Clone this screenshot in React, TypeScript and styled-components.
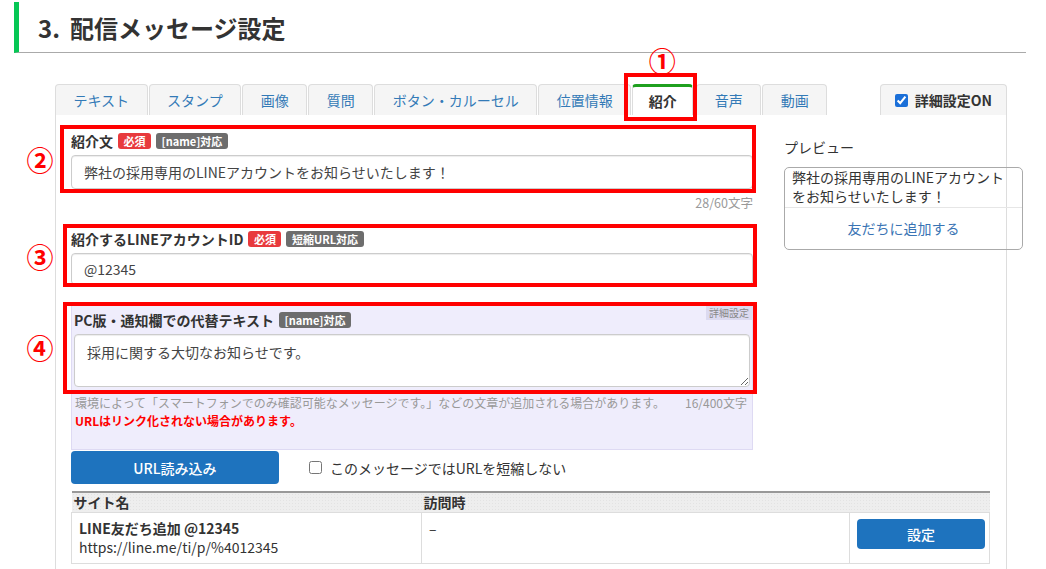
import React from 'react';
import styled, { createGlobalStyle, css } from 'styled-components';

const GlobalStyle = createGlobalStyle`
  * {
    box-sizing: border-box;
  }

  body {
    margin: 0;
    background: #fff;
    color: #333;
    font-family: "Noto Sans CJK JP", "Noto Sans", sans-serif;
  }
`;

const Page = styled.div`
  height: 569px;
  overflow: hidden;
  padding: 2px 20px 0 14px;
  width: 1046px;
`;

const SectionHeader = styled.h2`
  align-items: center;
  border-bottom: 1px solid #aaa;
  border-left: 5px solid #06c755;
  color: #333;
  display: flex;
  font-size: 24px;
  font-weight: bold;
  height: 51px;
  margin: 0;
  padding-left: 19px;
`;

const SectionNumber = styled.span`
  margin-right: 10px;
`;

const Editor = styled.div`
  margin: 31px 0 0 41px;
  width: 952px;
`;

const TabRow = styled.div`
  align-items: flex-end;
  display: flex;
  height: 31px;
  justify-content: space-between;
`;

const Tabs = styled.div`
  display: flex;
  gap: 1px;
`;

const Tab = styled.div<{ $active?: boolean }>`
  align-items: center;
  background: #f5f5f5;
  border: 1px solid #ddd;
  border-bottom: none;
  border-radius: 4px 4px 0 0;
  color: #337ab7;
  display: flex;
  font-size: 14px;
  height: 31px;
  padding: 0 17.5px;
  position: relative;
  white-space: nowrap;

  ${(p) => p.$active && css`
    background: #fff;
    border-top: 3px solid #1fa01f;
    color: #333;
    font-weight: bold;
    margin-right: 2px;
    padding: 0 15.5px;
  `}
`;

const DetailToggle = styled.label`
  align-items: center;
  background: #f5f5f5;
  border: 1px solid #ddd;
  border-bottom: none;
  border-radius: 4px 4px 0 0;
  color: #333;
  display: flex;
  font-size: 14px;
  font-weight: bold;
  gap: 7px;
  height: 31px;
  padding: 0 14px;
`;

const Check = styled.input`
  accent-color: #1a6fd8;
  height: 13px;
  margin: 0;
  width: 13px;
`;

const Panel = styled.div`
  border-left: 1px solid #ddd;
  border-right: 1px solid #ddd;
  display: flex;
  gap: 31px;
  min-height: 460px;
  padding: 16px 0 0 15px;
`;

const MainColumn = styled.div`
  flex-shrink: 0;
  width: 682px;
`;

const PreviewColumn = styled.div`
  flex-shrink: 0;
  width: 239px;
`;

const Annotated = styled.div`
  position: relative;
`;

const Frame = styled.span<{ $t: number; $r: number; $b: number; $l: number }>`
  border: 4px solid #f00;
  bottom: ${(p) => p.$b}px;
  left: ${(p) => p.$l}px;
  pointer-events: none;
  position: absolute;
  right: ${(p) => p.$r}px;
  top: ${(p) => p.$t}px;
  z-index: 5;
`;

const Marker = styled.span<{ $x: number; $y: number }>`
  color: #f00;
  font-family: "Noto Sans CJK JP", sans-serif;
  font-size: 27px;
  font-weight: bold;
  left: ${(p) => p.$x}px;
  line-height: 1;
  position: absolute;
  top: ${(p) => p.$y}px;
  transform: translate(-50%, -50%);
  z-index: 5;
`;

const FieldLabel = styled.div`
  align-items: center;
  color: #333;
  display: flex;
  font-size: 14px;
  font-weight: bold;
  gap: 5px;
  height: 20px;
  white-space: nowrap;
`;

const Badge = styled.span<{ $tone: 'red' | 'gray' }>`
  background: ${(p) => (p.$tone === 'red' ? '#e83a3d' : '#6d6d6d')};
  border-radius: 3px;
  color: #fff;
  display: inline-block;
  font-size: 11px;
  font-weight: bold;
  height: 16px;
  line-height: 16px;
  padding: 0 5.5px;
`;

const TextInput = styled.input<{ $height: number }>`
  border: 1px solid #ccc;
  border-radius: 4px;
  box-shadow: inset 0 1px 1px rgba(0, 0, 0, .075);
  color: #444;
  display: block;
  font-family: inherit;
  font-size: 14px;
  height: ${(p) => p.$height}px;
  margin-top: 4px;
  padding: 0 12px;
  width: 100%;
`;

const Counter = styled.div`
  color: #999;
  font-size: 12.5px;
  line-height: 16px;
  margin: 6px 0 18px;
  text-align: right;
`;

const AltTextBox = styled.div`
  background: #efedfc;
  border: 1px solid #dedaf3;
  margin-top: 17px;
  padding: 7px 2px 20px;
  position: relative;
`;

const DetailTag = styled.span`
  background: #dcdaf0;
  color: #888;
  font-size: 10px;
  line-height: 15px;
  padding: 0 3px;
  position: absolute;
  right: 0;
  top: 2px;
`;

const TextArea = styled.textarea`
  border: 1px solid #ccc;
  border-radius: 4px;
  box-shadow: inset 0 1px 1px rgba(0, 0, 0, .075);
  color: #444;
  display: block;
  font-family: inherit;
  font-size: 14px;
  height: 53px;
  line-height: 20px;
  margin-top: 4px;
  padding: 7px 12px;
  resize: vertical;
  width: 100%;
`;

const HelpRow = styled.div`
  color: #999;
  display: flex;
  font-size: 12px;
  justify-content: space-between;
  line-height: 16px;
  margin: 8px 3px 0 1px;
`;

const Warning = styled.div`
  color: #f00;
  font-size: 12px;
  font-weight: bold;
  line-height: 16px;
  margin: 2px 0 0 1px;
`;

const ActionRow = styled.div`
  align-items: center;
  display: flex;
  margin-top: 1px;
`;

const PrimaryButton = styled.button<{ $width: number; $height: number }>`
  background: #1e73be;
  border: none;
  border-radius: 4px;
  color: #fff;
  font-family: inherit;
  font-size: 14px;
  font-weight: 500;
  height: ${(p) => p.$height}px;
  padding: 0;
  width: ${(p) => p.$width}px;
`;

const ShortenOption = styled.label`
  align-items: center;
  color: #333;
  display: flex;
  font-size: 14px;
  gap: 8px;
  margin-left: 30px;
`;

const LinkTable = styled.table`
  border-collapse: collapse;
  border-top: 2px solid #999;
  margin-top: 7px;
  table-layout: fixed;
  width: 918px;
`;

const HeadCell = styled.th<{ $width: number }>`
  background-color: #eee;
  background-image: radial-gradient(#e3e3e3 0.6px, transparent 0.8px);
  background-size: 3px 3px;
  border-bottom: 1px solid #ddd;
  color: #333;
  font-size: 14px;
  font-weight: bold;
  height: 20px;
  line-height: 19px;
  padding: 0 2px;
  text-align: left;
  width: ${(p) => p.$width}px;
`;

const BodyCell = styled.td`
  border: 1px solid #ddd;
  border-top: none;
  color: #333;
  font-size: 14px;
  height: 51px;
  line-height: 19px;
  padding: 6px 7px;
  vertical-align: top;
`;

const SiteName = styled.div`
  font-weight: bold;
`;

const PreviewTitle = styled.div`
  color: #333;
  font-size: 14px;
  line-height: 20px;
  margin-top: 6px;
`;

const PreviewCard = styled.div`
  border: 1px solid #aaa;
  border-radius: 5px;
  margin-top: 10px;
`;

const PreviewText = styled.div`
  border-bottom: 1px solid #e6e6e6;
  color: #333;
  font-size: 14px;
  line-height: 19px;
  padding: 0 7px 1px;
`;

const PreviewLink = styled.div`
  color: #3a74b4;
  font-size: 14px;
  line-height: 41px;
  text-align: center;
`;

const tabs = ['テキスト', 'スタンプ', '画像', '質問', 'ボタン・カルーセル', '位置情報', '紹介', '音声', '動画'];

const introText = '弊社の採用専用のLINEアカウントをお知らせいたします！';

const App: React.FC = () => (
  <Page>
    <GlobalStyle />
    <SectionHeader>
      <SectionNumber>3.</SectionNumber>
      配信メッセージ設定
    </SectionHeader>
    <Editor>
      <TabRow>
        <Tabs>
          {tabs.map((label) => (
            label === '紹介' ? (
              <Tab key={label} $active>
                {label}
                <Frame $t={-14} $r={-5} $b={-6} $l={-9} />
                <Marker $x={29} $y={-27}>①</Marker>
              </Tab>
            ) : (
              <Tab key={label}>{label}</Tab>
            )
          ))}
        </Tabs>
        <DetailToggle>
          <Check type="checkbox" defaultChecked />
          詳細設定ON
        </DetailToggle>
      </TabRow>
      <Panel>
        <MainColumn>
          <Annotated>
            <FieldLabel>
              紹介文
              <Badge $tone="red">必須</Badge>
              <Badge $tone="gray">[name]対応</Badge>
            </FieldLabel>
            <TextInput $height={34} defaultValue={introText} />
            <Frame $t={-6} $r={-3} $b={-4} $l={-11} />
            <Marker $x={-31} $y={28}>②</Marker>
          </Annotated>
          <Counter>28/60文字</Counter>
          <Annotated>
            <FieldLabel>
              紹介するLINEアカウントID
              <Badge $tone="red">必須</Badge>
              <Badge $tone="gray">短縮URL対応</Badge>
            </FieldLabel>
            <TextInput $height={32} defaultValue="@12345" />
            <Frame $t={-5} $r={-4} $b={-2} $l={-8} />
            <Marker $x={-31} $y={27}>③</Marker>
          </Annotated>
          <AltTextBox>
            <DetailTag>詳細設定</DetailTag>
            <Annotated>
              <FieldLabel>
                PC版・通知欄での代替テキスト
                <Badge $tone="gray">[name]対応</Badge>
              </FieldLabel>
              <TextArea defaultValue="採用に関する大切なお知らせです。" />
              <Frame $t={-8} $r={-7} $b={-7} $l={-11} />
              <Marker $x={-34} $y={37}>④</Marker>
            </Annotated>
            <HelpRow>
              <span>環境によって「スマートフォンでのみ確認可能なメッセージです。」などの文章が追加される場合があります。</span>
              <span>16/400文字</span>
            </HelpRow>
            <Warning>URLはリンク化されない場合があります。</Warning>
          </AltTextBox>
          <ActionRow>
            <PrimaryButton $width={208} $height={33}>URL読み込み</PrimaryButton>
            <ShortenOption>
              <Check type="checkbox" />
              このメッセージではURLを短縮しない
            </ShortenOption>
          </ActionRow>
          <LinkTable>
            <thead>
              <tr>
                <HeadCell $width={350}>サイト名</HeadCell>
                <HeadCell $width={428}>訪問時</HeadCell>
                <HeadCell $width={140} />
              </tr>
            </thead>
            <tbody>
              <tr>
                <BodyCell>
                  <SiteName>LINE友だち追加 @12345</SiteName>
                  https://line.me/ti/p/%4012345
                </BodyCell>
                <BodyCell>–</BodyCell>
                <BodyCell>
                  <PrimaryButton $width={128} $height={30}>設定</PrimaryButton>
                </BodyCell>
              </tr>
            </tbody>
          </LinkTable>
        </MainColumn>
        <PreviewColumn>
          <PreviewTitle>プレビュー</PreviewTitle>
          <PreviewCard>
            <PreviewText>{introText}</PreviewText>
            <PreviewLink>友だちに追加する</PreviewLink>
          </PreviewCard>
        </PreviewColumn>
      </Panel>
    </Editor>
  </Page>
);

export default App;
